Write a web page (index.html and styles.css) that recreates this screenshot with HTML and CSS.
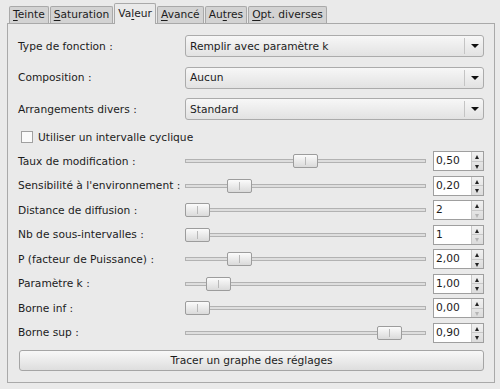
FILE: index.html
```html
<!DOCTYPE html>
<html lang="fr">

<head>
    <meta charset="UTF-8">
    <title>Valeur</title>
    <link rel="stylesheet" href="styles.css">
</head>

<body>
    <div class="tabs">
        <div class="tab"><u>T</u>einte</div>
        <div class="tab"><u>S</u>aturation</div>
        <div class="tab active">Va<u>l</u>eur</div>
        <div class="tab"><u>A</u>vancé</div>
        <div class="tab">Au<u>t</u>res</div>
        <div class="tab"><u>O</u>pt. diverses</div>
    </div>

    <div class="panel">
        <div class="combos">
            <div class="row">
                <span class="label">Type de fonction :</span>
                <div class="combo"><span>Remplir avec paramètre k</span><i class="arrow"></i></div>
            </div>
            <div class="row">
                <span class="label">Composition :</span>
                <div class="combo"><span>Aucun</span><i class="arrow"></i></div>
            </div>
            <div class="row">
                <span class="label">Arrangements divers :</span>
                <div class="combo"><span>Standard</span><i class="arrow"></i></div>
            </div>
        </div>

        <label class="check"><span class="box"></span>Utiliser un intervalle cyclique</label>

        <div class="sliders">
            <div class="row">
                <span class="label">Taux de modification :</span>
                <div class="slider"><div class="track"></div><div class="handle" style="left: 108px"></div></div>
                <div class="spin"><span class="value">0,50</span><div class="btns"><i class="up"></i><i class="down"></i></div></div>
            </div>
            <div class="row">
                <span class="label">Sensibilité à l'environnement :</span>
                <div class="slider"><div class="track"></div><div class="handle" style="left: 42px"></div></div>
                <div class="spin"><span class="value">0,20</span><div class="btns"><i class="up"></i><i class="down"></i></div></div>
            </div>
            <div class="row">
                <span class="label">Distance de diffusion :</span>
                <div class="slider"><div class="track"></div><div class="handle" style="left: 0px"></div></div>
                <div class="spin"><span class="value">2</span><div class="btns"><i class="up"></i><i class="down off"></i></div></div>
            </div>
            <div class="row">
                <span class="label">Nb de sous-intervalles :</span>
                <div class="slider"><div class="track"></div><div class="handle" style="left: 0px"></div></div>
                <div class="spin"><span class="value">1</span><div class="btns"><i class="up"></i><i class="down off"></i></div></div>
            </div>
            <div class="row">
                <span class="label">P (facteur de Puissance) :</span>
                <div class="slider"><div class="track"></div><div class="handle" style="left: 42px"></div></div>
                <div class="spin"><span class="value">2,00</span><div class="btns"><i class="up"></i><i class="down"></i></div></div>
            </div>
            <div class="row">
                <span class="label">Paramètre k :</span>
                <div class="slider"><div class="track"></div><div class="handle" style="left: 21px"></div></div>
                <div class="spin"><span class="value">1,00</span><div class="btns"><i class="up"></i><i class="down"></i></div></div>
            </div>
            <div class="row">
                <span class="label">Borne inf :</span>
                <div class="slider"><div class="track"></div><div class="handle" style="left: 0px"></div></div>
                <div class="spin"><span class="value">0,00</span><div class="btns"><i class="up"></i><i class="down off"></i></div></div>
            </div>
            <div class="row">
                <span class="label">Borne sup :</span>
                <div class="slider"><div class="track"></div><div class="handle" style="left: 192px"></div></div>
                <div class="spin"><span class="value">0,90</span><div class="btns"><i class="up"></i><i class="down"></i></div></div>
            </div>
        </div>

        <button class="plot">Tracer un graphe des réglages</button>
    </div>
</body>

</html>
```

FILE: styles.css
```css
body {
    margin: 0;
    background-color: #eaeaea;
    font-family: "DejaVu Sans", sans-serif;
    font-size: 10.67px;
    color: #1c1c1c;
}

u {
    text-decoration: underline;
    text-underline-offset: 2px;
}

/* tab strip */
.tabs {
    display: flex;
    align-items: flex-end;
    height: 23px;
    padding-left: 9px;
    gap: 1px;
}

.tab {
    height: 16px;
    padding: 0 3px;
    line-height: 15px;
    background-color: #d3d3d3;
    border: 1px solid #a9a9a9;
    border-bottom: none;
    border-radius: 2px 2px 0 0;
}

.tab.active {
    height: 20px;
    line-height: 20px;
    background-color: #eaeaea;
    position: relative;
    top: 1px;
    z-index: 1;
}

.panel {
    margin: 0 5px 0 7px;
    height: 358px;
    border: 1px solid #a9a9a9;
    padding: 11px 10px 0 10px;
    box-sizing: border-box;
    height: 360px;
}

.row {
    display: flex;
    align-items: center;
}

.label {
    width: 167px;
    flex-shrink: 0;
    white-space: nowrap;
}

/* combo boxes */
.combos {
    display: flex;
    flex-direction: column;
    gap: 9.5px;
}

.combo {
    flex: 1;
    height: 22px;
    box-sizing: border-box;
    border: 1px solid #ababab;
    border-radius: 3px;
    background: linear-gradient(#f7f7f7, #e2e2e2);
    display: flex;
    align-items: center;
    padding-left: 4px;
    position: relative;
}

.combo span {
    flex: 1;
}

.combo .arrow {
    width: 18px;
    height: 16px;
    border-left: 1px solid #c4c4c4;
    position: relative;
}

.combo .arrow::after {
    content: "";
    position: absolute;
    left: 6px;
    top: 6px;
    border-left: 4px solid transparent;
    border-right: 4px solid transparent;
    border-top: 4px solid #111;
}

/* checkbox */
.check {
    display: flex;
    align-items: center;
    height: 14px;
    margin-top: 10px;
    padding-left: 3px;
}

.check .box {
    width: 10px;
    height: 10px;
    border: 1px solid #a0a0a0;
    background-color: #fafafa;
    margin-right: 5px;
}

/* sliders */
.sliders {
    display: flex;
    flex-direction: column;
    gap: 4.57px;
    margin-top: 7px;
}

.sliders .row {
    height: 20px;
}

.slider {
    flex: 1;
    height: 14px;
    position: relative;
    margin-right: 7px;
}

.track {
    position: absolute;
    left: 0;
    right: 0;
    top: 5px;
    height: 4px;
    box-sizing: border-box;
    border: 1px solid #b2b2b2;
    background-color: #dedede;
}

.handle {
    position: absolute;
    top: 0;
    width: 25px;
    height: 14px;
    box-sizing: border-box;
    border: 1px solid #9c9c9c;
    border-radius: 2px;
    background: linear-gradient(#fbfbfb, #dadada);
}

.handle::after {
    content: "";
    position: absolute;
    left: 11px;
    top: 2px;
    width: 1px;
    height: 8px;
    background-color: #b8b8b8;
}

.spin {
    width: 51px;
    height: 20px;
    box-sizing: border-box;
    border: 1px solid #9f9f9f;
    background-color: #fff;
    display: flex;
}

.spin .value {
    flex: 1;
    padding-left: 2px;
    line-height: 18px;
}

.btns {
    width: 11px;
    display: flex;
    flex-direction: column;
    background: linear-gradient(#f1f1f1, #dcdcdc);
    border-left: 1px solid #c8c8c8;
}

.btns i {
    flex: 1;
    position: relative;
}

.btns i + i {
    border-top: 1px solid #c8c8c8;
}

.btns i::after {
    content: "";
    position: absolute;
    left: 3px;
    top: 3px;
    border-left: 2.5px solid transparent;
    border-right: 2.5px solid transparent;
}

.btns .up::after {
    border-bottom: 4px solid #222;
}

.btns .down::after {
    top: 3px;
    border-top: 4px solid #222;
}

.btns .down.off::after {
    border-top-color: #b5b5b5;
}

/* bottom button */
.plot {
    display: block;
    width: 465px;
    height: 21px;
    margin: 7px 0 0 1px;
    border: 1px solid #a5a5a5;
    border-radius: 3px;
    background: linear-gradient(#f8f8f8, #dedede);
    font-family: "DejaVu Sans", sans-serif;
    font-size: 10.67px;
    color: #1c1c1c;
    padding: 0;
}
```
